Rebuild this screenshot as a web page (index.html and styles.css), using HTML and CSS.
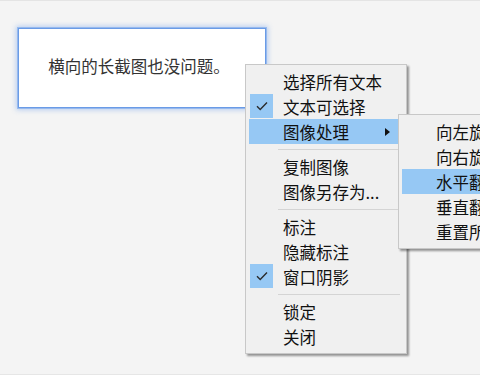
FILE: index.html
```html
<!DOCTYPE html>
<html lang="zh-CN">
<head>
    <meta charset="UTF-8">
    <meta name="viewport" content="width=device-width, initial-scale=1.0">
    <title>长截图</title>
    <link rel="stylesheet" href="styles.css">
</head>
<body>
    <div class="page">
        <!-- Note card -->
        <div class="note">横向的长截图也没问题。</div>

        <!-- Context Menu -->
        <div class="menu">
            <div class="item">选择所有文本</div>
            <div class="item checked">
                <span class="check"><svg width="12" height="10" viewBox="0 0 12 10"><path d="M1 5.2 L4.2 8.4 L11 1.4" fill="none" stroke="#2b2b2b" stroke-width="1.4"/></svg></span>
                文本可选择
            </div>
            <div class="item active has-sub">
                图像处理
                <span class="arrow"></span>

                <!-- Submenu -->
                <div class="menu submenu">
                    <div class="item">向左旋转</div>
                    <div class="item">向右旋转</div>
                    <div class="item active">水平翻转</div>
                    <div class="item">垂直翻转</div>
                    <div class="item">重置所有</div>
                </div>
            </div>
            <div class="sep"></div>
            <div class="item">复制图像</div>
            <div class="item">图像另存为...</div>
            <div class="sep"></div>
            <div class="item">标注</div>
            <div class="item">隐藏标注</div>
            <div class="item checked">
                <span class="check"><svg width="12" height="10" viewBox="0 0 12 10"><path d="M1 5.2 L4.2 8.4 L11 1.4" fill="none" stroke="#2b2b2b" stroke-width="1.4"/></svg></span>
                窗口阴影
            </div>
            <div class="sep"></div>
            <div class="item">锁定</div>
            <div class="item">关闭</div>
        </div>
    </div>
</body>
</html>
```

FILE: styles.css
```css
/* Base */
* {
    box-sizing: border-box;
    margin: 0;
    padding: 0;
}

body {
    font-family: "Noto Sans CJK SC", "Noto Sans", sans-serif;
    background: #f4f4f4;
    width: 480px;
    height: 375px;
    overflow: hidden;
}

.page {
    position: relative;
    height: 375px;
    padding: 28px 0 0 18px;
    border-top: 1px solid #e4e4e4;
    border-bottom: 1px solid #e6e6e6;
}

/* Note card */
.note {
    width: 248px;
    height: 80px;
    margin-top: -1px;
    background: #ffffff;
    border: 1px solid #6a9be6;
    box-shadow: 0 0 0 1px rgba(110, 160, 235, 0.55), 0 0 5px 2px rgba(110, 160, 235, 0.45);
    display: flex;
    align-items: center;
    justify-content: center;
    font-size: 16.5px;
    color: #333333;
    padding-right: 6px;
    padding-bottom: 4px;
}

/* Context menu */
.menu {
    position: absolute;
    top: 63px;
    left: 245px;
    width: 162px;
    padding: 4px 0;
    background: #f0f0f0;
    border: 1px solid #c8c8c8;
    box-shadow: 2px 2px 2px rgba(0, 0, 0, 0.4);
}

.item {
    position: relative;
    height: 25px;
    margin: 0 3px;
    padding-left: 34px;
    display: flex;
    align-items: center;
    font-size: 16.5px;
    color: #111111;
    white-space: nowrap;
}

.item.active {
    background: #96c8f4;
}

.check {
    position: absolute;
    left: 1px;
    top: 0;
    width: 23px;
    height: 24px;
    background: #96c8f4;
    display: flex;
    align-items: center;
    justify-content: center;
}

.arrow {
    position: absolute;
    right: 13px;
    top: 9px;
    border-left: 5px solid #111111;
    border-top: 4px solid transparent;
    border-bottom: 4px solid transparent;
}

.sep {
    height: 1px;
    margin: 5px 6px 4px 32px;
    background: #d4d4d4;
}

/* Submenu */
.submenu {
    top: -5px;
    left: 149px;
    width: 150px;
}
```
